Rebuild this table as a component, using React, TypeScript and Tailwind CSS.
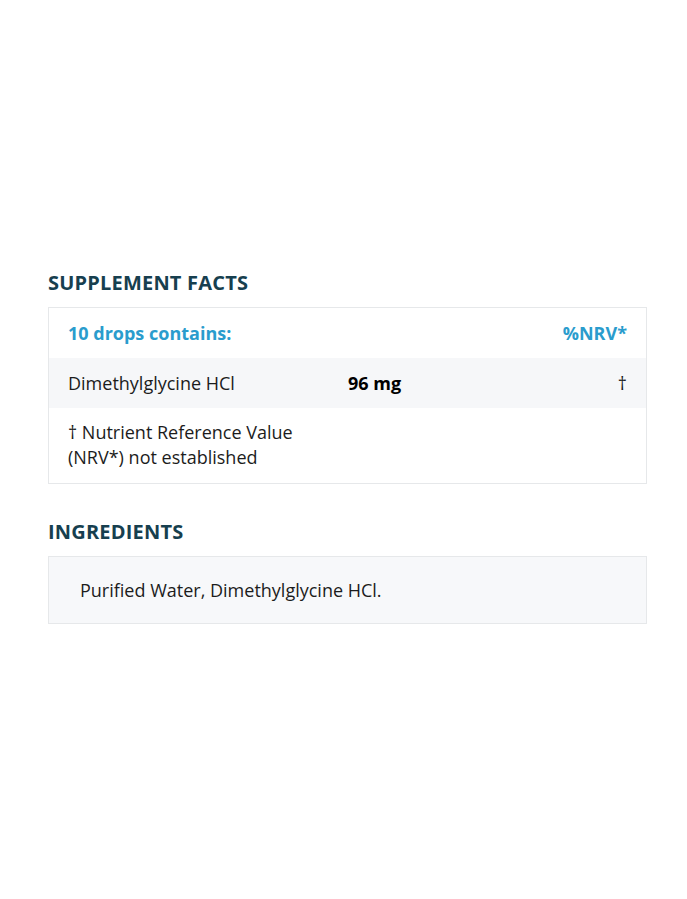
import React from 'react';

const App: React.FC = () => {
  return (
    <div className="min-h-[899px] bg-white pt-[269px] pl-12 pr-10 font-['Open_Sans',sans-serif]">
      {/* Supplement facts */}
      <h2 className="text-[20px] font-bold text-[#173f4f] tracking-[0.2px] leading-[28px] mb-[10px]">
        SUPPLEMENT FACTS
      </h2>
      <div className="border border-[#e6e8ea] bg-white">
        <div className="grid grid-cols-[280px_1fr_auto] items-center h-[50px] px-[19px]">
          <span className="col-span-2 text-[18px] font-bold text-[#2a9ccd]">10 drops contains:</span>
          <span className="text-[18px] font-bold text-[#2a9ccd]">%NRV*</span>
        </div>
        <div className="grid grid-cols-[280px_1fr_auto] items-center h-[50px] px-[19px] bg-[#f6f7f9]">
          <span className="text-[18px] text-[#1c1c1c]">Dimethylglycine HCl</span>
          <span className="text-[18px] font-bold text-black">96 mg</span>
          <span className="text-[18px] text-[#1c1c1c]">†</span>
        </div>
        <div className="px-[19px] pt-[12px] pb-[13px] text-[18px] leading-[25px] text-[#1c1c1c]">
          † Nutrient Reference Value
          <br />
          (NRV*) not established
        </div>
      </div>

      {/* Ingredients */}
      <h2 className="mt-[34px] text-[20px] font-bold text-[#173f4f] tracking-[0.2px] leading-[28px] mb-[10px]">
        INGREDIENTS
      </h2>
      <div className="border border-[#e6e8ea] bg-[#f7f8fa] h-[68px] flex items-center px-[31px]">
        <p className="text-[18px] text-[#1c1c1c]">Purified Water, Dimethylglycine HCl.</p>
      </div>
    </div>
  );
};

export default App;
